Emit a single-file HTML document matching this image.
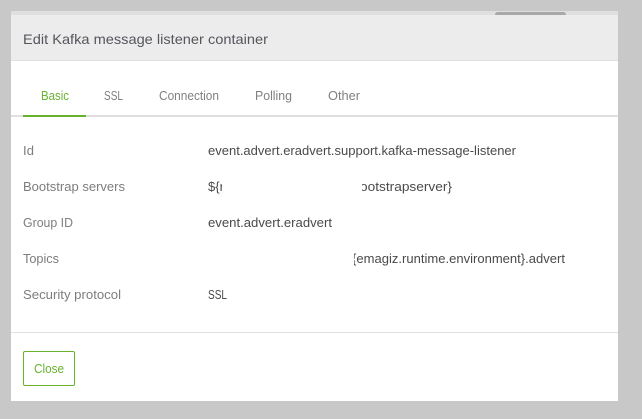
<!DOCTYPE html>
<html>
<head>
<meta charset="utf-8">
<style>
html,body{margin:0;padding:0;width:642px;height:419px;overflow:hidden;background:#c8c8c8}
svg{display:block}
text{font-family:"Liberation Sans",sans-serif;font-size:13px}
.l{fill:#7d7d7d}
.v{fill:#4a4a4a}
.t{fill:#808080}
</style>
</head>
<body>
<svg width="642" height="419" viewBox="0 0 642 419" xmlns="http://www.w3.org/2000/svg">
<defs>
<clipPath id="c1"><rect x="208" y="178" width="14" height="18"/></clipPath>
<clipPath id="c2"><rect x="362" y="178" width="95" height="18"/></clipPath>
<clipPath id="c3"><rect x="354" y="250" width="215" height="18"/></clipPath>
</defs>
<rect width="642" height="419" fill="#c8c8c8"/>
<rect x="11" y="11" width="607" height="390" fill="#fff"/>
<rect x="11" y="11" width="607" height="4" fill="#dfdfdf"/>
<path d="M495 15 Q495 12 498 12 H563 Q566 12 566 15 Z" fill="#a8a8a8"/>
<rect x="11" y="15" width="607" height="45" fill="#ececec"/>
<rect x="11" y="60" width="607" height="1" fill="#e0e0e0"/>
<text x="23" y="44" style="font-size:14px" fill="#54565c" textLength="245" lengthAdjust="spacingAndGlyphs">Edit Kafka message listener container</text>

<text x="41" y="100" fill="#68b22e" style="font-size:12.5px" textLength="28" lengthAdjust="spacingAndGlyphs">Basic</text>
<text x="104" y="100" class="t" style="font-size:12.5px" textLength="19" lengthAdjust="spacingAndGlyphs">SSL</text>
<text x="159" y="100" class="t" style="font-size:12.5px" textLength="60" lengthAdjust="spacingAndGlyphs">Connection</text>
<text x="255" y="100" class="t" textLength="37" lengthAdjust="spacingAndGlyphs">Polling</text>
<text x="328" y="100" class="t" textLength="32" lengthAdjust="spacingAndGlyphs">Other</text>
<rect x="11" y="115" width="607" height="2" fill="#e0e0e0"/>
<rect x="23" y="115" width="63" height="2" fill="#68b22e"/>

<text x="23" y="155" class="l" textLength="11" lengthAdjust="spacing">Id</text>
<text x="23" y="191" class="l" textLength="102" lengthAdjust="spacingAndGlyphs">Bootstrap servers</text>
<text x="23" y="227" class="l" textLength="50" lengthAdjust="spacingAndGlyphs">Group ID</text>
<text x="23" y="263" class="l" textLength="36" lengthAdjust="spacingAndGlyphs">Topics</text>
<text x="23" y="299" class="l" textLength="98" lengthAdjust="spacingAndGlyphs">Security protocol</text>

<text x="208" y="155" class="v" textLength="308" lengthAdjust="spacingAndGlyphs">event.advert.eradvert.support.kafka-message-listener</text>
<text x="208" y="191" class="v" clip-path="url(#c1)">${r</text>
<text x="360" y="191" class="v" clip-path="url(#c2)" textLength="92" lengthAdjust="spacingAndGlyphs">ootstrapserver}</text>
<text x="208" y="227" class="v" textLength="124" lengthAdjust="spacingAndGlyphs">event.advert.eradvert</text>
<text x="352" y="263" class="v" clip-path="url(#c3)" textLength="213" lengthAdjust="spacingAndGlyphs">{emagiz.runtime.environment}.advert</text>
<text x="208" y="299" class="v" style="font-size:12.5px" textLength="19" lengthAdjust="spacingAndGlyphs">SSL</text>

<rect x="11" y="332" width="607" height="1" fill="#e0e0e0"/>
<rect x="23.5" y="351.5" width="51" height="34" rx="1.5" fill="#fff" stroke="#68b22e"/>
<text x="34" y="373" fill="#68b22e" textLength="30" lengthAdjust="spacingAndGlyphs">Close</text>
</svg>
</body>
</html>
